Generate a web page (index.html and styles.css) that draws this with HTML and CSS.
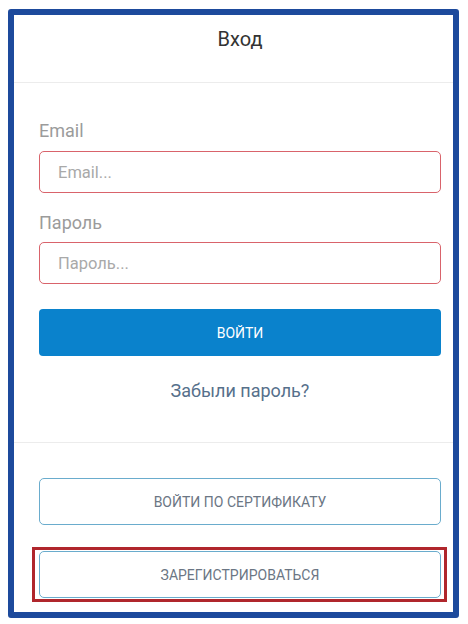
FILE: index.html
```html
<!DOCTYPE html>
<html lang="ru">
<head>
    <meta charset="UTF-8">
    <meta name="viewport" content="width=device-width, initial-scale=1.0">
    <title>Вход</title>
    <link rel="stylesheet" href="styles.css">
</head>
<body>
    <div class="frame">
        <div class="header">Вход</div>

        <form class="login" onsubmit="return false">
            <label class="label" for="email">Email</label>
            <input class="field" id="email" type="text" placeholder="Email...">

            <label class="label label-pass" for="password">Пароль</label>
            <input class="field" id="password" type="password" placeholder="Пароль...">

            <button class="btn-primary" type="submit">Войти</button>

            <a class="forgot" href="#">Забыли пароль?</a>
        </form>

        <div class="extra">
            <button class="btn-outline" type="button">Войти по сертификату</button>
            <div class="highlight">
                <button class="btn-outline" type="button">Зарегистрироваться</button>
            </div>
        </div>
    </div>
</body>
</html>
```

FILE: styles.css
```css
* {
    margin: 0;
    padding: 0;
    box-sizing: border-box;
}

body {
    font-family: Roboto, 'Liberation Sans', Arial, sans-serif;
    background: #fff;
    color: #333;
}

.frame {
    margin: 9px 9px 0 8px;
    width: 451px;
    height: 609px;
    border: 6px solid #1d4a9c;
    border-radius: 3px;
    background: #fff;
}

.header {
    padding: 13px 0 31px 13px;
    font-size: 20px;
    line-height: 23px;
    text-align: center;
    color: #333;
    border-bottom: 1px solid #ececec;
}

.login {
    display: flex;
    flex-direction: column;
    padding: 37px 12px 41px 25px;
    border-bottom: 1px solid #ececec;
}

.label {
    font-size: 18px;
    line-height: 21px;
    color: #9b9b9b;
    margin-bottom: 10px;
}

.label-pass {
    margin-top: 19px;
    margin-bottom: 9px;
}

.field {
    height: 42px;
    border: 1px solid #d9636b;
    border-radius: 5px;
    padding: 0 18px;
    font-family: inherit;
    font-size: 16.5px;
    color: #333;
    outline: none;
}

.field::placeholder {
    color: #a9a9a9;
}

.btn-primary {
    margin-top: 25px;
    height: 47px;
    border: none;
    border-radius: 4px;
    background: #0a82cc;
    color: #fff;
    font-family: inherit;
    font-size: 14px;
    text-transform: uppercase;
    cursor: pointer;
}

.forgot {
    margin-top: 24px;
    font-size: 18px;
    line-height: 21px;
    text-align: center;
    color: #56708b;
    text-decoration: none;
}

.extra {
    display: flex;
    flex-direction: column;
    padding: 35px 12px 0 25px;
}

.btn-outline {
    width: 100%;
    height: 47px;
    border: 1px solid #6aaccd;
    border-radius: 5px;
    background: #fff;
    color: #6b7684;
    font-family: inherit;
    font-size: 14px;
    text-transform: uppercase;
    cursor: pointer;
}

.highlight {
    margin: 22px -6px 0 -7px;
    padding: 1px 3px 1px 4px;
    border: 3px solid #b0262c;
}
```
